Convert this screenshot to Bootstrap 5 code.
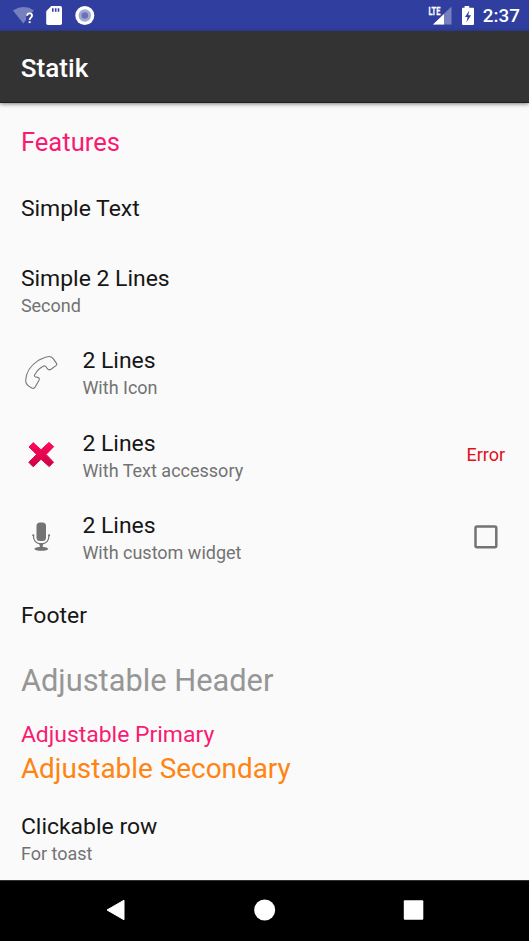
<!DOCTYPE html>
<html lang="en">
<head>
<meta charset="utf-8">
<meta name="viewport" content="width=device-width, initial-scale=1">
<title>Statik</title>
<link href="https://cdn.jsdelivr.net/npm/bootstrap@5.3.0/dist/css/bootstrap.min.css" rel="stylesheet">
<style>
body{font-family:Roboto,"Liberation Sans",sans-serif;background:#fafafa;color:#161616;height:941px;overflow:hidden}
svg{display:block;flex:none}
.statusbar{height:31px;background:#303f9f;color:#fff;padding:0 9.2px 0 12px}
.clock{font-size:18.8px;line-height:30px;padding-top:1px;font-weight:500}
.appbar{height:72px;background:#333;padding:2px 20.8px 0;box-shadow:0 1px 4px rgba(0,0,0,.5);border-bottom:1px solid #202020;z-index:1}
.appbar h1{font-size:26.1px;line-height:30px;font-weight:500;color:#fff}
.rows>*{padding:0 23.5px 0 20.9px;flex:none}
.row-two{height:82.4px}
.row-two.first{height:81.9px}
.row-two .lines{margin-top:2px}
.primary{font-size:22.95px;line-height:29px}
.secondary{font-size:18px;line-height:25.5px;color:#737373}
.icon-slot{width:61.5px;margin-bottom:1.6px}
.pink{color:#f81b72}
.err{font-size:18px;color:#e0101c;margin:0 .4px .8px 0}
.checkbox{margin:0 7.8px 1.2px 0}
.head1{height:78.5px;font-size:25.6px}
.simple{height:54px}
.spacer{height:14px}
.rows>.foot{height:70.9px;padding-top:2px}
.rows>.head2{height:60px;font-size:30.8px;color:#969696;padding-top:3.4px}
.rows>.adjust{height:87.5px;padding-top:1.6px}
.adjust .second{font-size:27.9px;line-height:38px;color:#ff8411;padding-top:1px}
.navbtns{height:61px;background:#000;border-top:1px solid #333;padding-bottom:2px}
</style>
<script src="https://cdn.jsdelivr.net/npm/bootstrap@5.3.0/dist/js/bootstrap.bundle.min.js"></script>
</head>
<body class="d-flex flex-column m-0">
<div class="statusbar d-flex align-items-center flex-shrink-0">
  <svg width="90" height="31" viewBox="0 0 90 31" role="img" aria-label="Notifications">
    <path d="M1 10.4Q12 3.5 22 10.4L18.5 14Q14 14 14 18V20L11.3 23.4Z" fill="#7780bf"/>
    <path d="M15.2 15.8Q15.2 13.4 17.6 13.4T20 15.7C20 17.6 17.6 17.8 17.6 20" fill="none" stroke="#fff" stroke-width="1.9"/>
    <rect x="16.7" y="21.2" width="1.9" height="1.9" fill="#fff"/>
    <path d="M39.3 6H48.3Q50 6 50 7.7V23.3Q50 25 48.3 25H35.9Q34.2 25 34.2 23.3V11.3Z" fill="#fff"/>
    <path d="M40.8 8.2V11.8M43.7 8.2V11.8M46.5 8.2V11.8" stroke="#303f9f" stroke-width="1.6"/>
    <circle cx="72.8" cy="15.5" r="9.5" fill="#fff"/><circle cx="72.8" cy="15.5" r="6.2" fill="#a3a9d5"/><circle cx="72.8" cy="15.5" r="3.3" fill="#6872b7"/>
  </svg>
  <svg class="ms-auto me-2" width="48" height="31" viewBox="0 0 48 31" role="img" aria-label="Signal and battery">
    <path d="M24.5 6.5V24.5H6Z" fill="#7780bf"/><path d="M17 14V24.5H6Z" fill="#fff"/>
    <text x="1.4" y="14.8" textLength="12" lengthAdjust="spacingAndGlyphs" font-family="Roboto" font-size="11.8" font-weight="700" fill="#fff" stroke="#fff" stroke-width=".3">LTE</text>
    <path d="M37.6 6H42.2V7.7H46Q47 7.7 47 8.7V24Q47 25 46 25H36Q35 25 35 24V8.7Q35 7.7 36 7.7H37.6Z" fill="#fff"/>
    <path d="M42.3 10.5L38 17H40.6L39.5 22.2L44.1 15.3H41.3Z" fill="#303f9f"/>
  </svg>
  <span class="clock">2:37</span>
</div>
<header class="appbar d-flex align-items-center flex-shrink-0 position-relative"><h1 class="m-0">Statik</h1></header>
<main class="rows d-flex flex-column flex-grow-1">
  <div class="head1 pink d-flex align-items-center">Features</div>
  <div class="simple primary d-flex align-items-center">Simple Text</div>
  <div class="spacer"></div>
  <div class="row-two first d-flex align-items-center"><div class="lines"><div class="primary">Simple 2 Lines</div><div class="secondary">Second</div></div></div>
  <div class="row-two d-flex align-items-center">
    <div class="icon-slot"><svg width="40" height="40" viewBox="0 0 40 40" fill="none" stroke="#777" stroke-width="1.1" stroke-linejoin="round"><path d="M24.6 5.3Q29.7 3.3 32.2 6.7L35.7 11.6Q36.2 12.8 35 13.6L30 17.3Q27.8 18.6 26.3 16.7Q24.8 13.8 23.4 13.8Q17.2 16.2 13.6 23Q13 24.4 14.3 24.8L17.2 25.6Q18.9 26.4 18 28.2L14.2 35Q13 37 10.8 36.1Q4.5 33 4.7 28.6Q5.3 16.1 17.1 8.6Q20.8 6.5 24.6 5.3Z"/></svg></div>
    <div class="lines"><div class="primary">2 Lines</div><div class="secondary">With Icon</div></div>
  </div>
  <div class="row-two d-flex align-items-center">
    <div class="icon-slot"><svg width="40" height="40" viewBox="0 0 40 40"><defs><linearGradient id="redfade" x2="0" y2="1"><stop stop-color="#ff0a5c"/><stop offset="1" stop-color="#cc0045"/></linearGradient></defs><path d="M12.2 8.6L20 15.8L28 8.4L32.7 12.7L25.1 20.4L32.5 28.2L28.2 32.6L20 25.2L12.2 32.8L7.8 28.3L15.6 20.4L8 13Z" fill="url(#redfade)" stroke="url(#redfade)" stroke-width="1" stroke-linejoin="round"/></svg></div>
    <div class="lines"><div class="primary">2 Lines</div><div class="secondary">With Text accessory</div></div>
    <div class="err ms-auto">Error</div>
  </div>
  <div class="row-two d-flex align-items-center">
    <div class="icon-slot"><svg width="40" height="40" viewBox="0 0 40 40" fill="#737373"><rect x="15.5" y="5.5" width="9.5" height="18.5" rx="3.5"/><path d="M12.4 18Q12.4 26.8 20.2 26.8T28 18" fill="none" stroke="#737373" stroke-width="1.2"/><circle cx="12.3" cy="18.3" r="1.1"/><circle cx="28.1" cy="18.3" r="1.1"/><path d="M17.5 26.2H23Q21.5 27.8 21.5 30.5H19Q19 27.8 17.5 26.2Z"/><ellipse cx="20.3" cy="31.8" rx="7" ry="2"/></svg></div>
    <div class="lines"><div class="primary">2 Lines</div><div class="secondary">With custom widget</div></div>
    <svg class="checkbox ms-auto" width="24" height="24" viewBox="0 0 24 24" role="checkbox" aria-checked="false"><rect x="1.5" y="1.5" width="20.8" height="20.8" rx="1.5" fill="none" stroke="#737373" stroke-width="2.5"/></svg>
  </div>
  <div class="foot primary d-flex align-items-center">Footer</div>
  <div class="head2 d-flex align-items-center">Adjustable Header</div>
  <div class="adjust d-flex flex-column justify-content-center"><div class="primary pink">Adjustable Primary</div><div class="second">Adjustable Secondary</div></div>
  <div class="row-two d-flex align-items-center"><div class="lines"><div class="primary">Clickable row</div><div class="secondary">For toast</div></div></div>
</main>
<nav class="navbtns d-flex align-items-center justify-content-center flex-shrink-0">
  <svg width="320" height="24" viewBox="0 0 320 24" fill="#fff"><path d="M2 12L19 2.2V21.8Z" stroke="#fff" stroke-width="1" stroke-linejoin="round"/><circle cx="159.7" cy="12" r="10.5"/><rect x="298.8" y="2.3" width="19.5" height="19.5" rx="1"/></svg>
</nav>
</body>
</html>
